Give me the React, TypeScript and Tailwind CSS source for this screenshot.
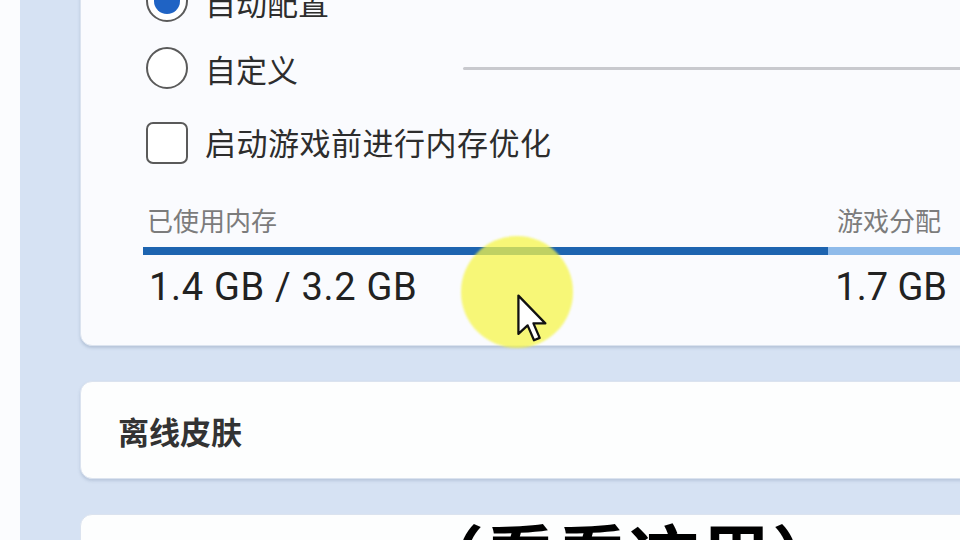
import React from 'react'

const cjk = { fontFamily: '"Noto Sans CJK SC", "Noto Sans", sans-serif' }
const num = { fontFamily: 'Roboto, "Noto Sans", sans-serif' }

function Radio({ checked }: { checked?: boolean }) {
  return (
    <div className="w-[42px] h-[42px] rounded-full border-2 border-[#5a5a5a] flex items-center justify-center shrink-0 bg-white">
      {checked && <div className="w-[26px] h-[26px] rounded-full bg-[#1f63c4]" />}
    </div>
  )
}

function Cursor() {
  return (
    <svg width="34" height="50" viewBox="0 0 24 35" className="absolute left-[517px] top-[294px]">
      <path d="M1 1 L1 28 L7.5 22 L12 32.5 L16 30.8 L11.6 20.6 L20 20.6 Z" fill="#fff" stroke="#111" strokeWidth="1.6" strokeLinejoin="round" />
    </svg>
  )
}

export default function App() {
  return (
    <div className="relative w-[960px] h-[540px] overflow-hidden flex bg-white" style={cjk}>
      <div className="w-[20px] shrink-0 bg-[#fbfcfe]" />
      <div className="flex-1 bg-[#d6e2f3] pl-[60px] flex flex-col gap-[35px]">
        {/* memory card */}
        <div className="w-[940px] mt-[-60px] rounded-[12px] bg-[#fafbfe] border border-[#dbe3ef] shadow-[0_2px_3px_rgba(120,140,170,0.35)] pt-[39px] pb-[38px] pl-[62px] pr-[20px]">
          <div className="flex items-center h-[42px] pl-[3px] gap-[17px]">
            <Radio checked />
            <span className="text-[31px] text-[#2d2d2d] leading-none">自动配置</span>
          </div>
          <div className="flex items-center h-[42px] pl-[3px] mt-[25px]">
            <Radio />
            <span className="ml-[17px] w-[258px] text-[31px] text-[#2d2d2d] leading-none">自定义</span>
            <div className="flex-1 h-[3px] bg-[#c8c9ce] rounded-full" />
          </div>
          <div className="flex items-center h-[42px] pl-[3px] mt-[33px] gap-[17px]">
            <div className="w-[42px] h-[42px] rounded-[7px] border-2 border-[#5a5a5a] bg-white shrink-0" />
            <span className="text-[31px] text-[#2d2d2d] leading-none mt-[-3px] tracking-[0.5px]">启动游戏前进行内存优化</span>
          </div>
          <div className="flex justify-between items-center mt-[42px] h-[28px] pl-[4px] pr-[58px] text-[26px] leading-none text-[#7c7c7c]">
            <span>已使用内存</span>
            <span>游戏分配</span>
          </div>
          <div className="flex h-[8px] mt-[13px]">
            <div className="w-[685px] bg-[#1d64b0]" />
            <div className="flex-1 bg-[#8fbbea]" />
          </div>
          <div className="flex justify-between items-center mt-[12px] h-[40px] pl-[6px] pr-[52px] text-[38px] leading-none text-[#222]" style={num}>
            <span className="tracking-[0.7px]">1.4 GB / 3.2 GB</span>
            <span>1.7 GB</span>
          </div>
        </div>

        {/* offline skins */}
        <div className="w-[940px] h-[98px] shrink-0 rounded-[12px] bg-[#fdfefe] border border-[#dbe3ef] shadow-[0_2px_3px_rgba(120,140,170,0.3)] flex items-center pl-[37px]">
          <span className="text-[31px] font-bold text-[#333] leading-none">离线皮肤</span>
        </div>

        <div className="w-[940px] h-[100px] shrink-0 rounded-[12px] bg-[#fdfefe] border border-[#dbe3ef]" />
      </div>

      {/* recording highlight + cursor */}
      <div className="absolute left-[461px] top-[236px] w-[112px] h-[112px] rounded-full bg-[#f5f64a]/75 blur-[1px]" />
      <Cursor />

      {/* subtitle */}
      <div className="absolute left-[412px] top-[518px] text-[72px] leading-none font-bold text-black whitespace-nowrap">（看看这里）</div>
    </div>
  )
}
